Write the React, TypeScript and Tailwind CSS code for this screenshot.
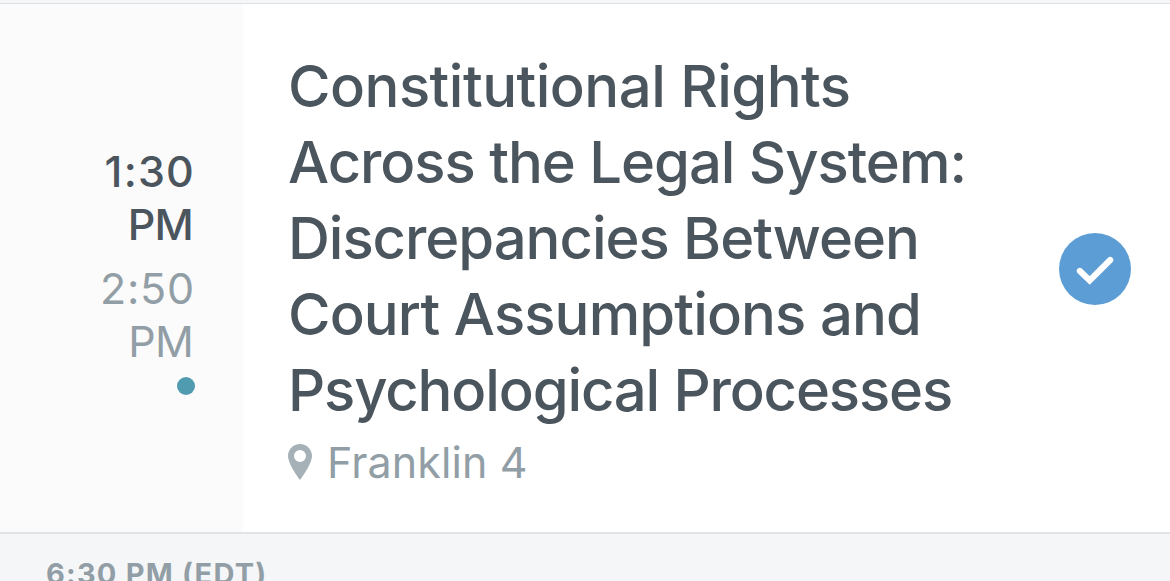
const titleLines = [
  { text: "Constitutional Rights", spacing: "tracking-[-0.52px]" },
  { text: "Across the Legal System:", spacing: "tracking-[-1.04px]" },
  { text: "Discrepancies Between", spacing: "tracking-[-1.04px]" },
  { text: "Court Assumptions and", spacing: "tracking-[-0.87px]" },
  { text: "Psychological Processes", spacing: "tracking-[-1.14px]" },
];

function PinIcon() {
  return (
    <svg viewBox="0 0 24 36" className="h-9 w-6 shrink-0" fill="#a6b0b7">
      <path
        fillRule="evenodd"
        d="M12 0C5.4 0 0 5.2 0 11.8C0 20.5 12 36 12 36S24 20.5 24 11.8C24 5.2 18.6 0 12 0ZM12 6A6 6 0 1 1 12 18A6 6 0 0 1 12 6Z"
      />
    </svg>
  );
}

export default function App() {
  return (
    <div className="flex h-[581px] w-[1170px] flex-col overflow-hidden bg-white font-['Inter',sans-serif]">
      <div className="h-1 shrink-0 border-b border-[#e0e1e5] bg-[#f5f6f8]" />

      <div className="flex h-[528px] shrink-0">
        {/* Time column */}
        <div className="flex w-[243px] flex-col items-end bg-[#fbfbfb] pt-[141px] pr-12 text-right text-[43px] leading-[53px]">
          <div className="font-medium text-[#4b555d]">
            <div className="tracking-[1.2px]">1:30</div>
            <div className="pr-[2px] tracking-[-0.8px]">PM</div>
          </div>
          <div className="mt-[11px] text-[#929ea6]">
            <div className="tracking-[0.8px]">2:50</div>
            <div className="pr-[2px] tracking-[-0.8px]">PM</div>
          </div>
          <div className="mt-[9px] size-[18px] rounded-full bg-[#519bb0]" />
        </div>

        {/* Session details */}
        <div className="w-[816px] pt-[44px] pl-[45px]">
          <h1 className="text-[58px] leading-[76px] font-medium whitespace-nowrap text-[#4b555d]">
            {titleLines.map((line) => (
              <span key={line.text} className={`block ${line.spacing}`}>
                {line.text}
              </span>
            ))}
          </h1>
          <div className="mt-[6px] flex items-center gap-[15px] text-[43px] leading-[56px] tracking-[0.1px] text-[#929ea6]">
            <PinIcon />
            <span>Franklin 4</span>
          </div>
        </div>

        <div className="flex flex-1 items-center pt-[2px]">
          <div className="flex size-[72px] items-center justify-center rounded-full bg-[#5c9dd5]">
            <svg viewBox="0 0 72 72" className="size-[72px]" fill="none">
              <path
                d="M20.9 38L30.7 47.5L51.2 27"
                stroke="white"
                strokeWidth="6.2"
                strokeLinecap="round"
                strokeLinejoin="miter"
              />
            </svg>
          </div>
        </div>
      </div>

      <div className="h-[49px] shrink-0 border-t-2 border-[#e1e3e4] bg-[#f5f6f8] pt-[22px] pl-[46px] text-[29px] leading-9 font-bold tracking-[1.2px] text-[#929ea6]">
        6:30 PM (EDT)
      </div>
    </div>
  );
}
